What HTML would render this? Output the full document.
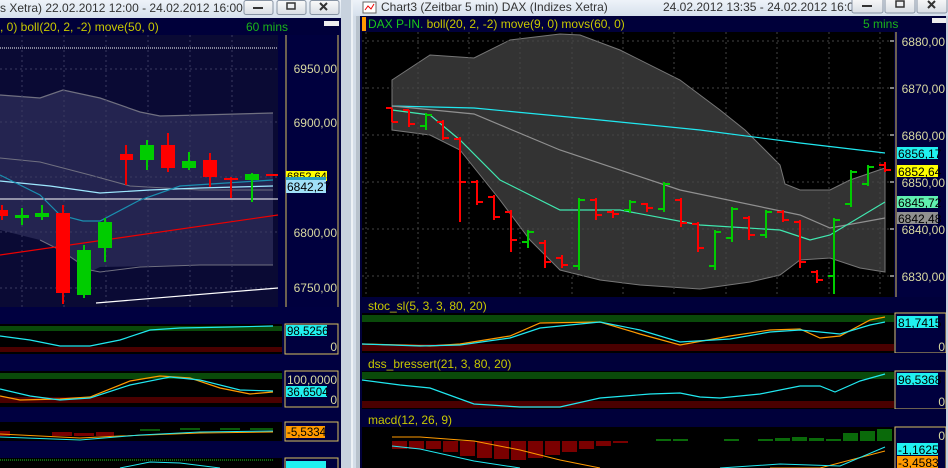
<!DOCTYPE html><html><head><meta charset="utf-8"><style>
html,body{margin:0;padding:0;width:948px;height:468px;overflow:hidden;background:#d4dde8}
svg{display:block;font-family:"Liberation Sans",sans-serif}
</style></head><body>
<svg width="948" height="468" viewBox="0 0 948 468" xmlns="http://www.w3.org/2000/svg">
<defs>
<linearGradient id="tb" x1="0" y1="0" x2="0" y2="1"><stop offset="0" stop-color="#eef3f9"/><stop offset="1" stop-color="#d6e0ec"/></linearGradient>
<linearGradient id="bt" x1="0" y1="0" x2="0" y2="1"><stop offset="0" stop-color="#fafafa"/><stop offset="1" stop-color="#d8dde4"/></linearGradient>
</defs>
<rect x="0" y="0" width="345" height="468" fill="#d4dde8"/>
<rect x="0" y="0" width="342" height="18" fill="url(#tb)"/>
<text x="0" y="12" font-size="12" fill="#333">s Xetra) 22.02.2012 12:00 - 24.02.2012 16:00</text>
<g stroke="#8894a4" fill="url(#bt)"><rect x="244" y="0.5" width="29" height="14" rx="2"/><rect x="277" y="0.5" width="29" height="14" rx="2"/><rect x="310" y="0.5" width="29" height="14" rx="2"/></g>
<rect x="253" y="7" width="10" height="2" fill="#333"/><rect x="287" y="3" width="8" height="6" fill="none" stroke="#333" stroke-width="1.5"/>
<path d="M320 3l7 7M327 3l-7 7" stroke="#333" stroke-width="2"/>
<rect x="0" y="18" width="341" height="450" fill="#000040"/>
<rect x="0" y="19" width="339" height="16" fill="#00003a"/>
<text x="0" y="31" font-size="12" fill="#c8c800">, 0) boll(20, 2, -2) move(50, 0)</text>
<text x="246" y="31" font-size="12" fill="#1ab41a">60 mins</text>
<rect x="324" y="21" width="15" height="5" fill="#eee"/>
<rect x="0" y="35" width="278" height="272" fill="#0a0a34"/>
<polygon points="0,95 40,98 63,90 100,98 140,112 160,116 200,115 273,113 273,265 200,265 100,267 90,272 60,250 40,240 0,230" fill="#242450"/>
<polyline points="0,95 40,98 63,90 100,98 140,112 160,116 200,115 273,113" fill="none" stroke="#707080" stroke-width="1.2"/>
<polyline points="0,158 40,162 90,175 130,186 200,190 273,190" fill="none" stroke="#707080"/>
<polyline points="40,240 60,250 90,270 100,272 140,267 200,265 273,265" fill="none" stroke="#707080"/>
<g stroke="#3a3a60" stroke-dasharray="2,3"><path d="M22 35V307M64 35V307M106 35V307M148 35V307M190 35V307M232 35V307M0 69H278M0 122H278M0 177H278M0 232H278M0 288H278"/></g>
<path d="M0 48H277" stroke="#fff" stroke-dasharray="1,1"/>
<path d="M0 199H278" stroke="#fff"/>
<path d="M0 255L278 215" stroke="#e00" stroke-width="1.2"/>
<path d="M96 303L278 288" stroke="#fff" stroke-width="1.2"/>
<polyline points="0,181 50,186 100,193 150,190 200,188 273,186" fill="none" stroke="#9ee8ff" stroke-width="1.2"/>
<polyline points="0,175 40,195 60,215 83,221 100,221 140,200 180,186 273,180" fill="none" stroke="#1a8fb0" stroke-width="1.2"/>
<g stroke-width="2">
<path d="M2 205V220M63 205V304M126 145V185M168 133V172M210 153V187M231 177V198" stroke="#e00"/>
<path d="M22 208V225M42 205V220M84 245V298M105 218V262M147 140V170M189 152V170M252 173V202" stroke="#0c0"/>
</g>
<g fill="#f00"><rect x="0" y="210" width="8" height="6"/><rect x="56" y="213" width="14" height="80"/><rect x="120" y="154" width="13" height="6"/><rect x="161" y="145" width="14" height="23"/><rect x="203" y="160" width="14" height="17"/><rect x="224" y="178" width="14" height="2"/><rect x="266" y="174" width="12" height="2"/></g>
<g fill="#0c0"><rect x="15" y="215" width="14" height="3"/><rect x="35" y="213" width="14" height="4"/><rect x="77" y="250" width="14" height="45"/><rect x="98" y="222" width="14" height="26"/><rect x="140" y="145" width="14" height="15"/><rect x="182" y="161" width="14" height="7"/><rect x="245" y="174" width="14" height="6"/></g>
<rect x="285" y="35" width="53" height="272" fill="#00003e"/>
<path d="M286 35V307M338 35V307" stroke="#d8c060" stroke-width="1"/>
<g fill="#d8d8a0" font-size="12" text-anchor="end"><text x="337" y="73">6950,00</text><text x="337" y="127">6900,00</text><text x="337" y="237">6800,00</text><text x="337" y="292">6750,00</text></g>
<rect x="286" y="171" width="41" height="10" fill="#ffff00"/><text x="287" y="180" font-size="11" fill="#000">6852,64</text>
<rect x="286" y="177" width="40" height="8" fill="#2aa0c0"/>
<rect x="286" y="180" width="40" height="13" fill="#a0e0f8"/><text x="287" y="191" font-size="12" fill="#000">6842,27</text>
<rect x="0" y="324" width="282" height="30" fill="#000"/><rect x="0" y="326" width="282" height="5" fill="#0a4a0a"/><rect x="0" y="347" width="282" height="5" fill="#4a0000"/>
<polyline points="0,336 30,340 60,346 90,346 120,340 150,330 180,328 230,327 273,326" fill="none" stroke="#20e8f0" stroke-width="1.2"/>
<rect x="285" y="324" width="53" height="30" fill="#00003e" stroke="#d8c060"/>
<rect x="286" y="325" width="41" height="11" fill="#20f0f0"/><text x="287" y="335" font-size="11.5" fill="#000">98,5256</text><text x="337" y="351" font-size="12" fill="#d8d8a0" text-anchor="end">0</text>
<rect x="0" y="371" width="282" height="36" fill="#000"/><rect x="0" y="373" width="282" height="6" fill="#0a4a0a"/><rect x="0" y="397" width="282" height="6" fill="#4a0000"/>
<polyline points="0,396 20,400 60,399 90,397 130,381 160,376 190,378 220,388 250,394 273,392" fill="none" stroke="#ff9a00" stroke-width="1.2"/>
<polyline points="0,389 30,396 60,400 90,398 130,385 170,377 200,380 240,390 273,391" fill="none" stroke="#20e8f0" stroke-width="1.2"/>
<rect x="285" y="371" width="53" height="36" fill="#00003e" stroke="#d8c060"/>
<text x="337" y="384" font-size="12" fill="#d8d8a0" text-anchor="end">100,0000</text>
<rect x="286" y="386" width="41" height="11" fill="#20f0f0"/><text x="287" y="396" font-size="11.5" fill="#000">36,6504</text><text x="337" y="404" font-size="12" fill="#d8d8a0" text-anchor="end">0</text>
<rect x="0" y="422" width="282" height="19" fill="#000"/>
<g fill="#7a0000"><rect x="0" y="431" width="10" height="5"/><rect x="52" y="432" width="20" height="4"/><rect x="74" y="433" width="20" height="3"/><rect x="96" y="432" width="18" height="4"/></g>
<g fill="#0a5a0a"><rect x="140" y="429" width="20" height="2"/><rect x="180" y="428" width="20" height="2"/><rect x="220" y="428" width="20" height="2"/><rect x="250" y="428" width="23" height="2"/></g>
<polyline points="0,434 80,438 120,436 200,433 273,432" fill="none" stroke="#ff9a00"/>
<polyline points="0,437 80,440 140,435 200,432 273,431" fill="none" stroke="#20e8f0"/>
<rect x="285" y="422" width="53" height="19" fill="#00003e" stroke="#d8c060"/>
<rect x="286" y="426" width="39" height="12" fill="#ff9a00"/><text x="287" y="436" font-size="11.5" fill="#000">-5,5334</text>
<rect x="0" y="458" width="282" height="10" fill="#000"/><path d="M0 460H273" stroke="#20d020" stroke-dasharray="1,1"/>
<polyline points="120,468 150,462 180,463 220,468" fill="none" stroke="#20e8f0"/>
<rect x="285" y="458" width="53" height="12" fill="#00003e" stroke="#d8c060"/><rect x="286" y="461" width="40" height="8" fill="#20f0f0"/>
<rect x="341" y="0" width="12" height="468" fill="#c8d2de"/><rect x="351" y="0" width="2" height="468" fill="#eef2f6"/>
<rect x="356" y="16" width="4" height="452" fill="#b8c2cc"/>
<rect x="353" y="0" width="595" height="16" fill="url(#tb)"/>
<rect x="363" y="2" width="13" height="11" fill="#fff" stroke="#666"/><path d="M365 10l3-4 3 3 3-5" stroke="#e00" fill="none"/>
<text x="381" y="11" font-size="12" fill="#333">Chart3 (Zeitbar 5 min)  DAX (Indizes Xetra)</text>
<text x="663" y="11" font-size="12" fill="#333">24.02.2012 13:35 - 24.02.2012 16:00</text>
<g stroke="#8894a4" fill="url(#bt)"><rect x="852" y="-2" width="31" height="15" rx="2"/><rect x="885" y="-2" width="30" height="15" rx="2"/><rect x="917" y="-2" width="30" height="15" rx="2"/></g>
<rect x="862" y="5" width="10" height="2" fill="#333"/><rect x="896" y="1" width="8" height="6" fill="none" stroke="#333" stroke-width="1.5"/>
<path d="M928 1l7 7M935 1l-7 7" stroke="#333" stroke-width="2"/>
<rect x="360" y="16" width="588" height="452" fill="#00003a"/>
<rect x="362" y="17" width="4" height="14" fill="#ff9a00"/>
<text x="368" y="28" font-size="12" fill="#1ac81a">DAX P-IN.<tspan fill="#c8c800"> boll(20, 2, -2) move(9, 0) movs(60, 0)</tspan></text>
<text x="863" y="28" font-size="12" fill="#1ab41a">5 mins</text>
<rect x="932" y="18" width="14" height="5" fill="#eee"/>
<rect x="362" y="32" width="532" height="265" fill="#000"/>
<polygon points="392,80 430,55 474,58 510,40 560,34 580,35 620,50 680,80 720,110 745,130 760,145 780,165 785,184 800,190 830,190 850,180 885,168 885,272 860,268 830,258 800,260 780,275 750,282 700,289 640,285 600,280 560,270 530,240 500,200 460,150 430,135 392,130" fill="#333" stroke="#777"/>
<g stroke="#444" stroke-dasharray="2,3"><path d="M366 32V297M418 32V297M469 32V297M520 32V297M572 32V297M623 32V297M674 32V297M726 32V297M777 32V297M829 32V297M880 32V297M362 41H894M362 88H894M362 135H894M362 182H894M362 229H894M362 276H894"/></g>
<polyline points="392,106 474,108 600,120 700,130 800,143 885,153" fill="none" stroke="#20e8f0" stroke-width="1.2"/>
<polyline points="392,106 474,114 560,150 680,190 800,215 830,228 885,218" fill="none" stroke="#909090" stroke-width="1.2"/>
<polyline points="392,110 430,115 460,140 500,180 560,210 620,210 700,225 780,230 810,240 830,235 885,202" fill="none" stroke="#40e8b0" stroke-width="1.2"/>
<g stroke-width="2" fill="none">
<path d="M392 108h-6M392 108V122M392 122h6M409 110V127M409 110h-6M409 124h6M443 120V140M443 122h-6M443 138h6M460 137V222M460 139h-6M460 182h6M477 180V205M477 182h-6M477 202h6M494 195V220M494 197h-6M494 217h6M511 210V252M511 212h-6M511 240h6M545 240V268M545 243h-6M545 262h6M562 255V268M562 258h-6M562 265h6M596 198V220M596 200h-6M596 215h6M613 210V218M613 212h-6M613 214h6M647 203V212M647 204h-6M647 208h6M681 198V227M681 200h-6M681 223h6M698 222V252M698 224h-6M698 248h6M749 216V240M749 218h-6M749 235h6M783 210V222M783 212h-6M783 220h6M800 220V268M800 222h-6M800 262h6M817 270V283M817 272h-6M817 280h6M885 162V172M885 165h-6M885 170h6" stroke="#f00"/>
<path d="M426 113V130M426 126h-6M426 115h6M528 230V248M528 242h-6M528 232h6M579 198V270M579 266h-6M579 200h6M630 200V213M630 210h-6M630 202h6M664 182V212M664 209h-6M664 184h6M715 230V270M715 266h-6M715 232h6M732 207V242M732 238h-6M732 209h6M766 210V238M766 235h-6M766 212h6M834 218V294M834 276h-6M834 220h6M851 170V207M851 204h-6M851 172h6M868 165V186M868 184h-6M868 167h6" stroke="#0c0"/>
</g>
<rect x="895" y="32" width="51" height="265" fill="#00003e"/>
<path d="M896 32V297" stroke="#d8c060"/>
<g stroke="#fff"><path d="M890 41h4M890 88h4M890 135h4M890 182h4M890 229h4M890 276h4"/></g>
<g fill="#d8d8a0" font-size="12" text-anchor="end"><text x="945" y="46">6880,00</text><text x="945" y="93">6870,00</text><text x="945" y="140">6860,00</text><text x="945" y="187">6850,00</text><text x="945" y="234">6840,00</text><text x="945" y="281">6830,00</text></g>
<rect x="897" y="147" width="41" height="12" fill="#20f0f0"/><text x="898" y="158" font-size="12" fill="#000">6856,17</text>
<rect x="897" y="165" width="41" height="12" fill="#ffff00"/><text x="898" y="176" font-size="12" fill="#000">6852,64</text>
<rect x="897" y="196" width="41" height="12" fill="#60f0b0"/><text x="898" y="207" font-size="12" fill="#000">6845,72</text>
<rect x="897" y="212" width="41" height="12" fill="#909090"/><text x="898" y="223" font-size="12" fill="#000">6842,48</text>
<rect x="360" y="297" width="588" height="16" fill="#00003a"/>
<text x="368" y="310" font-size="12" fill="#c8c800">stoc_sl(5, 3, 3, 80, 20)</text>
<rect x="362" y="313" width="532" height="40" fill="#000"/><rect x="362" y="315" width="532" height="7" fill="#0a4a0a"/><rect x="362" y="344" width="532" height="7" fill="#4a0000"/>
<polyline points="362,344 400,345 430,346 460,344 510,336 540,323 600,322 640,334 680,345 730,336 770,330 800,329 820,338 840,336 870,320 885,317" fill="none" stroke="#ff9a00" stroke-width="1.2"/>
<polyline points="362,344 420,346 460,345 510,338 540,328 600,322 640,330 680,342 730,339 770,332 800,330 840,334 870,325 885,322" fill="none" stroke="#20e8f0" stroke-width="1.2"/>
<rect x="895" y="313" width="51" height="40" fill="#00003e" stroke="#d8c060"/>
<rect x="897" y="316" width="41" height="12" fill="#20f0f0"/><text x="898" y="327" font-size="12" fill="#000">81,7415</text><text x="945" y="351" font-size="12" fill="#d8d8a0" text-anchor="end">0</text>
<rect x="360" y="353" width="588" height="18" fill="#00003a"/>
<text x="368" y="368" font-size="12" fill="#c8c800">dss_bressert(21, 3, 80, 20)</text>
<rect x="362" y="371" width="532" height="38" fill="#000"/><rect x="362" y="372" width="532" height="7" fill="#0a4a0a"/><rect x="362" y="401" width="532" height="7" fill="#4a0000"/>
<polyline points="362,380 400,385 430,388 474,404 520,407 560,407 600,398 650,394 680,393 700,397 720,398 760,394 800,386 820,386 835,392 860,381 885,374" fill="none" stroke="#20e8f0" stroke-width="1.2"/>
<rect x="895" y="371" width="51" height="38" fill="#00003e" stroke="#d8c060"/>
<rect x="897" y="373" width="41" height="12" fill="#20f0f0"/><text x="898" y="384" font-size="12" fill="#000">96,5368</text><text x="945" y="406" font-size="12" fill="#d8d8a0" text-anchor="end">0</text>
<rect x="360" y="409" width="588" height="18" fill="#00003a"/>
<text x="368" y="424" font-size="12" fill="#c8c800">macd(12, 26, 9)</text>
<rect x="362" y="427" width="532" height="41" fill="#000"/>
<g fill="#7a0000"><rect x="392" y="441" width="15" height="8"/><rect x="409" y="441" width="15" height="8"/><rect x="426" y="441" width="15" height="8"/><rect x="443" y="441" width="15" height="11"/><rect x="460" y="441" width="15" height="15"/><rect x="477" y="441" width="15" height="17"/><rect x="494" y="441" width="15" height="18"/><rect x="511" y="441" width="15" height="19"/><rect x="528" y="441" width="15" height="17"/><rect x="545" y="441" width="15" height="14"/><rect x="562" y="441" width="15" height="11"/><rect x="579" y="441" width="15" height="8"/><rect x="596" y="441" width="15" height="5"/><rect x="613" y="441" width="15" height="2"/></g>
<g fill="#0a6a0a"><rect x="656" y="439" width="15" height="2"/><rect x="673" y="439" width="15" height="2"/><rect x="724" y="439" width="15" height="2"/><rect x="758" y="439" width="15" height="2"/><rect x="775" y="438" width="15" height="3"/><rect x="792" y="437" width="15" height="4"/><rect x="809" y="438" width="15" height="3"/><rect x="826" y="439" width="15" height="2"/><rect x="843" y="433" width="15" height="8"/><rect x="860" y="431" width="15" height="10"/><rect x="877" y="429" width="15" height="12"/></g>
<polyline points="392,437 420,437 474,441 520,450 560,460 600,468" fill="none" stroke="#ff9a00"/>
<polyline points="392,446 420,449 474,461 520,468" fill="none" stroke="#20e8f0"/>
<polyline points="770,468 820,468 885,451" fill="none" stroke="#ff9a00"/>
<polyline points="720,468 780,464 840,466 885,447" fill="none" stroke="#20e8f0"/>
<rect x="895" y="427" width="51" height="45" fill="#00003e" stroke="#d8c060"/>
<text x="945" y="440" font-size="12" fill="#d8d8a0" text-anchor="end">0</text>
<rect x="897" y="443" width="41" height="12" fill="#20f0f0"/><text x="898" y="454" font-size="12" fill="#000">-1,1625</text>
<rect x="897" y="456" width="41" height="12" fill="#ff9a00"/><text x="898" y="467" font-size="12" fill="#000">-3,4583</text>
<rect x="946" y="16" width="2" height="452" fill="#c8d2de"/>
</svg>
</body></html>
